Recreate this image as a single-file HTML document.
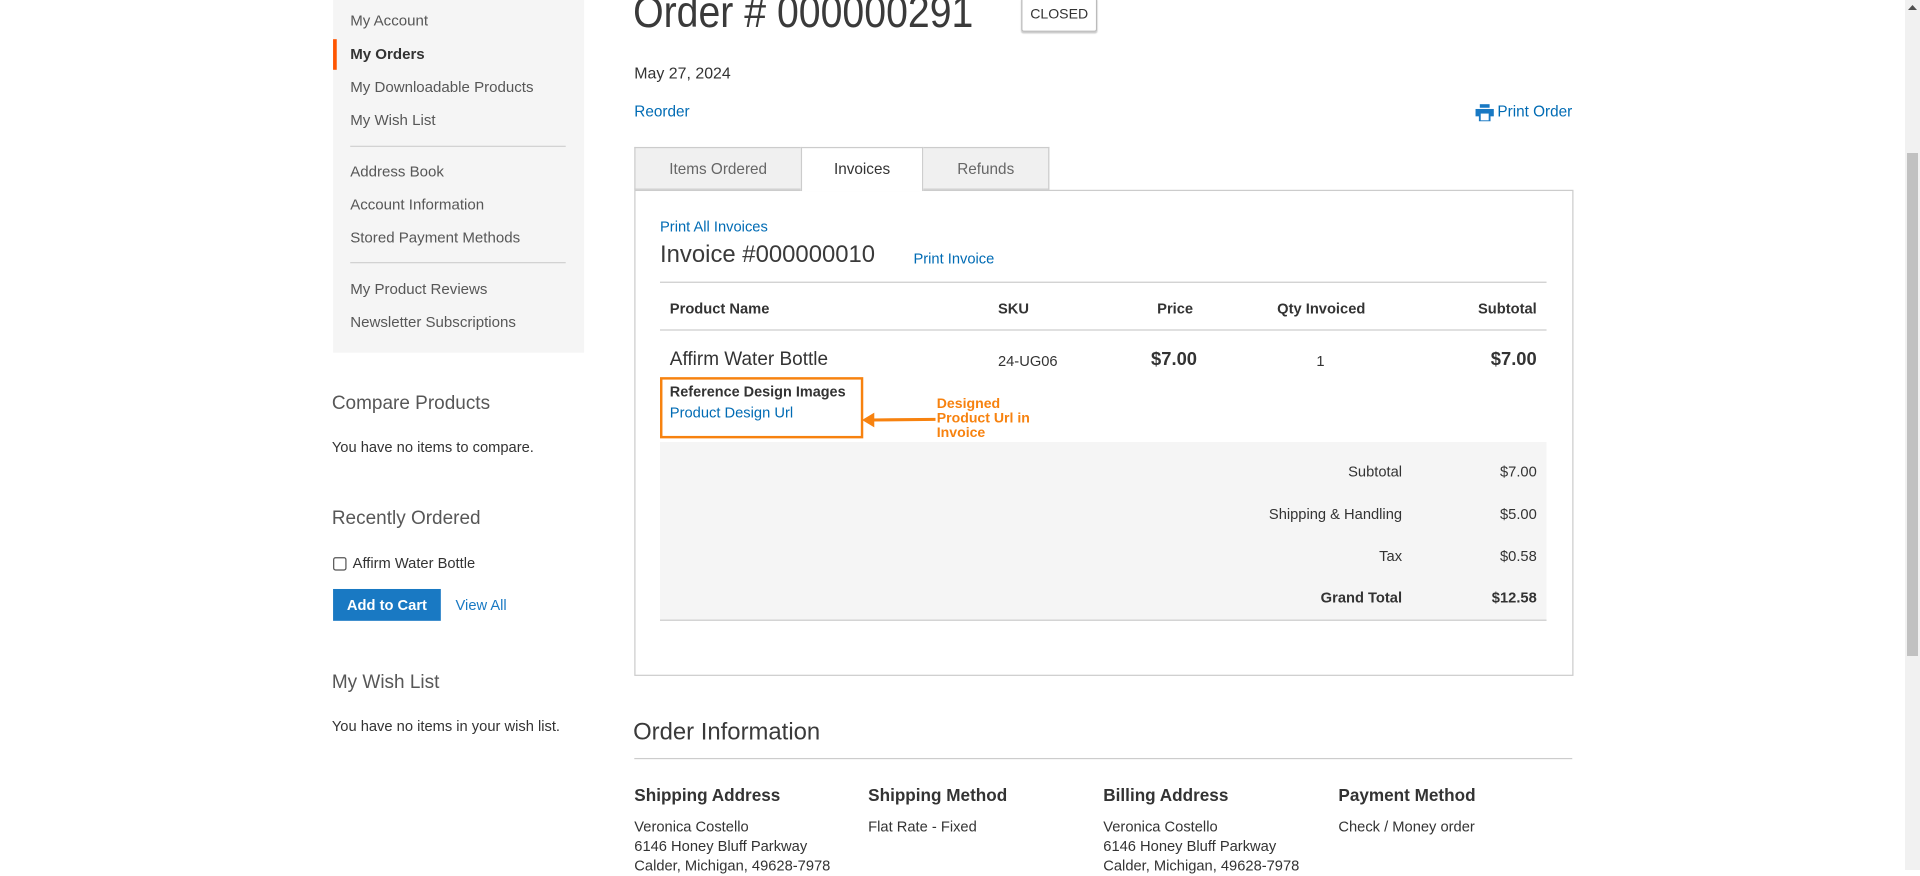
<!DOCTYPE html>
<html><head><meta charset="utf-8"><style>
html,body{margin:0;padding:0;width:1920px;height:870px;overflow:hidden;background:#fff;font-family:"Liberation Sans",Arial,sans-serif;color:#333}
#w{position:absolute;left:0;top:0;width:1568px;height:711px;transform:scale(1.2245);transform-origin:0 0}
.a{position:absolute;white-space:nowrap;line-height:20px}
.side{position:absolute;left:272px;top:0;width:205px;height:288px;background:#f5f5f5}
.nav{position:absolute;left:286px;font-size:12.3px;color:#575757;line-height:20px}
.hr{position:absolute;height:1px;background:#d1d1d1}
.lk{color:#1979c3}
.b{font-weight:bold}
.r{text-align:right}
</style></head><body>
<div id="w">
<div class="side"></div>
<div style="position:absolute;left:272px;top:32px;width:3px;height:25px;background:#ff5501"></div>
<div class="nav" style="top:7px">My Account</div>
<div class="nav b" style="top:34px;color:#333">My Orders</div>
<div class="nav" style="top:61px">My Downloadable Products</div>
<div class="nav" style="top:88px">My Wish List</div>
<div class="hr" style="left:286px;top:119px;width:176px"></div>
<div class="nav" style="top:130px">Address Book</div>
<div class="nav" style="top:157px">Account Information</div>
<div class="nav" style="top:184px">Stored Payment Methods</div>
<div class="hr" style="left:286px;top:214px;width:176px"></div>
<div class="nav" style="top:226px">My Product Reviews</div>
<div class="nav" style="top:253px">Newsletter Subscriptions</div>

<div class="a" style="left:271px;top:319px;font-size:15.5px;color:#575757;line-height:22px">Compare Products</div>
<div class="a" style="left:271px;top:355px;font-size:12px">You have no items to compare.</div>
<div class="a" style="left:271px;top:413px;font-size:15.5px;color:#575757;line-height:22px">Recently Ordered</div>
<div style="position:absolute;left:272px;top:455px;width:9px;height:9px;border:1px solid #555;border-radius:2px"></div>
<div class="a" style="left:288px;top:450px;font-size:12px">Affirm Water Bottle</div>
<div style="position:absolute;left:272px;top:481px;width:88px;height:26px;background:#1979c3;color:#fff;font-size:12px;font-weight:bold;line-height:26px;text-align:center">Add to Cart</div>
<div class="a lk" style="left:372px;top:484px;font-size:12px">View All</div>
<div class="a" style="left:271px;top:547px;font-size:15.5px;color:#575757;line-height:22px">My Wish List</div>
<div class="a" style="left:271px;top:583px;font-size:12px">You have no items in your wish list.</div>

<div class="a" style="left:517px;top:-12px;font-size:36px;line-height:44px;color:#3a3a3a;transform:scaleX(0.89);transform-origin:0 0">Order # 000000291</div>
<div style="position:absolute;left:834px;top:-2px;width:60px;height:26px;border:1px solid #bbb;border-radius:2px;box-shadow:0 1px 1px #ccc;font-size:11.5px;line-height:26px;text-align:center;color:#333">CLOSED</div>
<div class="a" style="left:518px;top:50px;font-size:13px">May 27, 2024</div>
<div class="a lk" style="left:518px;top:81px;font-size:12.5px;color:#006bb4">Reorder</div>
<svg style="position:absolute;left:1205px;top:85px" width="15" height="14" viewBox="0 0 15 14"><rect x="3.5" y="0" width="8" height="3" fill="#1979c3"/><rect x="0" y="4" width="15" height="6" fill="#1979c3"/><rect x="3.5" y="7" width="8" height="7" fill="#fff" stroke="#1979c3" stroke-width="1.5"/></svg>
<div class="a lk r" style="left:1184px;width:100px;top:81px;font-size:12.5px;color:#006bb4">Print Order</div>

<div style="position:absolute;left:518px;top:155px;width:765px;height:395px;border:1px solid #ccc"></div>
<div style="position:absolute;left:518px;top:120px;width:136px;height:35px;background:#f0f0f0;border:1px solid #ccc;border-right:none;box-sizing:border-box;font-size:12.5px;color:#666;text-align:center;line-height:34px">Items Ordered</div>
<div style="position:absolute;left:654px;top:120px;width:100px;height:36px;background:#fff;border:1px solid #ccc;border-bottom:none;box-sizing:border-box;font-size:12.5px;color:#333;text-align:center;line-height:34px">Invoices</div>
<div style="position:absolute;left:754px;top:120px;width:103px;height:35px;background:#f0f0f0;border:1px solid #ccc;border-left:none;box-sizing:border-box;font-size:12.5px;color:#666;text-align:center;line-height:34px">Refunds</div>

<div class="a lk" style="left:539px;top:175px;font-size:12px;color:#006bb4">Print All Invoices</div>
<div class="a" style="left:539px;top:196px;font-size:19.5px;line-height:24px;color:#3a3a3a">Invoice #000000010</div>
<div class="a lk" style="left:746px;top:201px;font-size:12px;color:#006bb4">Print Invoice</div>
<div class="hr" style="left:539px;top:230px;width:724px;background:#ccc"></div>
<div class="a b" style="left:547px;top:242px;font-size:12px">Product Name</div>
<div class="a b" style="left:815px;top:242px;font-size:12px">SKU</div>
<div class="a b" style="left:945px;top:242px;font-size:12px">Price</div>
<div class="a b" style="left:1043px;top:242px;font-size:12px">Qty Invoiced</div>
<div class="a b" style="left:1155px;width:100px;top:242px;font-size:12px;text-align:right">Subtotal</div>
<div class="hr" style="left:539px;top:269px;width:724px;background:#ccc"></div>
<div class="a" style="left:547px;top:283px;font-size:15.5px;line-height:22px">Affirm Water Bottle</div>
<div class="a" style="left:815px;top:285px;font-size:12px">24-UG06</div>
<div class="a b" style="left:940px;top:284px;font-size:15px">$7.00</div>
<div class="a" style="left:1075px;top:285px;font-size:12px">1</div>
<div class="a b" style="left:1155px;width:100px;top:284px;font-size:15px;text-align:right">$7.00</div>

<div style="position:absolute;left:539px;top:308px;width:162px;height:46px;border:2.5px solid #f7820f"></div>
<div class="a b" style="left:547px;top:310px;font-size:11.8px">Reference Design Images</div>
<div class="a lk" style="left:547px;top:327px;font-size:12px;color:#006bb4">Product Design Url</div>
<svg style="position:absolute;left:704px;top:336px" width="60" height="14"><line x1="8" y1="7" x2="60" y2="6.5" stroke="#f7820f" stroke-width="2.5"/><polygon points="0,7 10,1 10,13" fill="#f7820f"/></svg>
<div class="a b" style="left:765px;top:324px;font-size:11.5px;color:#f7820f;line-height:12px">Designed<br>Product Url in<br>Invoice</div>

<div style="position:absolute;left:539px;top:361px;width:724px;height:145px;background:#f5f5f5;border-bottom:1px solid #ccc"></div>
<div class="a r" style="left:945px;width:200px;top:375px;font-size:12px">Subtotal</div>
<div class="a r" style="left:1155px;width:100px;top:375px;font-size:12px">$7.00</div>
<div class="a r" style="left:945px;width:200px;top:410px;font-size:12px">Shipping &amp; Handling</div>
<div class="a r" style="left:1155px;width:100px;top:410px;font-size:12px">$5.00</div>
<div class="a r" style="left:945px;width:200px;top:444px;font-size:12px">Tax</div>
<div class="a r" style="left:1155px;width:100px;top:444px;font-size:12px">$0.58</div>
<div class="a r b" style="left:945px;width:200px;top:478px;font-size:12px">Grand Total</div>
<div class="a r b" style="left:1155px;width:100px;top:478px;font-size:12px">$12.58</div>

<div class="a" style="left:517px;top:586px;font-size:19.5px;line-height:24px;color:#3a3a3a">Order Information</div>
<div class="hr" style="left:518px;top:619px;width:766px;background:#ccc"></div>
<div class="a b" style="left:518px;top:639px;font-size:14px">Shipping Address</div>
<div class="a b" style="left:709px;top:639px;font-size:14px">Shipping Method</div>
<div class="a b" style="left:901px;top:639px;font-size:14px">Billing Address</div>
<div class="a b" style="left:1093px;top:639px;font-size:14px">Payment Method</div>
<div class="a" style="left:518px;top:667px;font-size:12px;line-height:16px">Veronica Costello<br>6146 Honey Bluff Parkway<br>Calder, Michigan, 49628-7978</div>
<div class="a" style="left:709px;top:667px;font-size:12px;line-height:16px">Flat Rate - Fixed</div>
<div class="a" style="left:901px;top:667px;font-size:12px;line-height:16px">Veronica Costello<br>6146 Honey Bluff Parkway<br>Calder, Michigan, 49628-7978</div>
<div class="a" style="left:1093px;top:667px;font-size:12px;line-height:16px">Check / Money order</div>
</div>
<div style="position:absolute;left:1905px;top:0;width:15px;height:870px;background:#f1f1f1"></div>
<div style="position:absolute;left:1907px;top:153px;width:11px;height:503px;background:#c1c1c1"></div>
<svg style="position:absolute;left:1907px;top:4px" width="11" height="8"><polygon points="5.5,1 10,6 1,6" fill="#505050"/></svg>
</body></html>
